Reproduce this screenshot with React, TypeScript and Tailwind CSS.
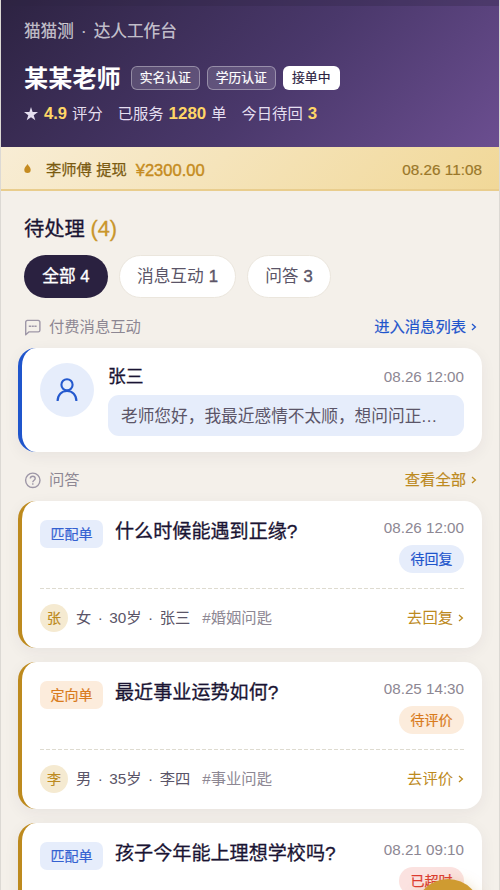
import type { ReactNode } from 'react';
import clsx from 'clsx';

type Order = {
  kind: string;
  title: string;
  time: string;
  status: string;
  user?: { avatar: string; info: string[]; topic: string; action: string };
};

const orders: Order[] = [
  {
    kind: '匹配单',
    title: '什么时候能遇到正缘?',
    time: '08.26 12:00',
    status: '待回复',
    user: { avatar: '张', info: ['女', '30岁', '张三'], topic: '#婚姻问匙', action: '去回复' },
  },
  {
    kind: '定向单',
    title: '最近事业运势如何?',
    time: '08.25 14:30',
    status: '待评价',
    user: { avatar: '李', info: ['男', '35岁', '李四'], topic: '#事业问匙', action: '去评价' },
  },
  { kind: '匹配单', title: '孩子今年能上理想学校吗?', time: '08.21 09:10', status: '已超时' },
];

const kindColors: Record<string, string> = {
  匹配单: 'bg-[#e6edfb] text-[#3461d1]',
  定向单: 'bg-[#fcecdc] text-[#d97b1c]',
};

const statusColors: Record<string, string> = {
  待回复: 'bg-[#e6edfb] text-[#1f55cc]',
  待评价: 'bg-[#fcecdc] text-[#d97b1c]',
  已超时: 'bg-[#fbe2e0] text-[#dc3b30]',
};

function Chevron() {
  return (
    <svg className="w-[6px] h-[8px] shrink-0" viewBox="0 0 6 8" fill="none" stroke="currentColor" strokeWidth="1.3">
      <path d="M1 1 4.4 4 1 7" />
    </svg>
  );
}

function SectionHead({ icon, label, link, color }: { icon: ReactNode; label: string; link: string; color: string }) {
  return (
    <div className="flex items-center h-6 pl-[23px] pr-[22px]">
      {icon}
      <span className="ml-2 text-[15.3px] text-[#8d8793]">{label}</span>
      <span className={clsx('ml-auto flex items-center gap-[5px] text-[15.3px] [-webkit-text-stroke:0.2px_currentColor]', color)}>
        {link}
        <Chevron />
      </span>
    </div>
  );
}

function OrderCard({ order }: { order: Order }) {
  const { user } = order;
  return (
    <div className="h-[147px] shrink-0 rounded-[18px] border-l-4 border-[#bd8a1e] bg-white pl-[18px] pr-[18px] shadow-[0_4px_16px_rgba(45,35,66,0.06)]">
      <div className="flex h-[87px] items-start">
        <span className={clsx('mt-[19px] flex h-[28px] w-[63px] items-center justify-center rounded-[7px] text-[14px] [-webkit-text-stroke:0.2px_currentColor]', kindColors[order.kind])}>
          {order.kind}
        </span>
        <h3 className="ml-[12px] mt-[17px] text-[19.1px] leading-[28px] text-[#1a1433] [-webkit-text-stroke:0.3px_currentColor]">{order.title}</h3>
        <div className="ml-auto mt-[16px] flex flex-col items-end">
          <span className="text-[15.2px] leading-[22px] text-[#8d8793]">{order.time}</span>
          <span className={clsx('mt-[6px] flex h-[28px] w-[65px] items-center justify-center rounded-full text-[14px] [-webkit-text-stroke:0.2px_currentColor]', statusColors[order.status])}>
            {order.status}
          </span>
        </div>
      </div>
      <div className="h-px bg-[repeating-linear-gradient(90deg,#dedbd0_0_4px,transparent_4px_6px)]" />
      {user && (
        <div className="flex h-[58px] items-center text-[15.3px]">
          <span className="flex size-[28px] items-center justify-center rounded-full bg-[#f5ead1] text-[14px] text-[#bd8a1e] [-webkit-text-stroke:0.2px_currentColor]">{user.avatar}</span>
          <span className="ml-[8px] flex text-[#5b5568]">
            {user.info.map((part, i) => (
              <span key={part} className="flex">
                {i > 0 && <span className="w-[18px] text-center">·</span>}
                {part}
              </span>
            ))}
          </span>
          <span className="ml-[12px] text-[#8d8793]">{user.topic}</span>
          <span className="ml-auto flex items-center gap-[5px] text-[#bd8a1e]">
            {user.action}
            <Chevron />
          </span>
        </div>
      )}
    </div>
  );
}

export default function App() {
  return (
    <div className="relative flex h-[890px] w-[500px] flex-col overflow-hidden border-x border-[#dcd9d4] bg-[#f4f0ea] font-['Liberation_Sans','Noto_Sans_CJK_SC',sans-serif] whitespace-nowrap">
      <header className="h-[147px] shrink-0 bg-[linear-gradient(135deg,#2d2342_0%,#4a386b_55%,#6b4e90_100%)] text-white">
        <div className="h-[6px] bg-[#2d2342]/30" />
        <div className="px-[23px]">
          <p className="mt-[14px] flex text-[16.6px] leading-[24px] text-white/70 [-webkit-text-stroke:0.2px_currentColor]">
            猫猫测<span className="w-[20px] text-center">·</span>达人工作台
          </p>
          <div className="mt-[17px] flex h-[34px] items-center">
            <h1 className="mt-[2px] text-[24.2px] leading-[34px] font-bold">某某老师</h1>
            <div className="ml-[10px] flex gap-[7px] text-[12.8px] [-webkit-text-stroke:0.2px_currentColor]">
              <span className="flex h-[24px] w-[69px] items-center justify-center rounded-[6px] border border-white/35 bg-white/15">实名认证</span>
              <span className="flex h-[24px] w-[69px] items-center justify-center rounded-[6px] border border-white/35 bg-white/15">学历认证</span>
              <span className="flex h-[24px] w-[57px] items-center justify-center rounded-[6px] bg-white text-[#2d2342]">接单中</span>
            </div>
          </div>
          <div className="mt-[7px] flex items-center text-[15.3px] leading-[24px] text-[#e5dff0]">
            <svg className="mr-[6px] size-[14px]" viewBox="0 0 13 13" fill="currentColor">
              <path d="M6.5 0 8 4.7H13L9 7.6 10.5 12.4 6.5 9.5 2.5 12.4 4 7.6 0 4.7H5Z" />
            </svg>
            <b className="mr-[5px] text-[16.6px] text-[#ffd666]">4.9</b>评分
            <span className="ml-[15px]">已服务</span>
            <b className="mx-[5px] text-[16.9px] text-[#ffd666]">1280</b>单
            <span className="ml-[15px]">今日待回</span>
            <b className="ml-[5px] text-[16.9px] text-[#ffd666]">3</b>
          </div>
        </div>
      </header>

      <div className="flex h-[44px] shrink-0 items-center border-b-2 border-[#e9cd8d] bg-[linear-gradient(135deg,#f8edd5,#f1d898)] pt-[4px] pr-[17px] pl-[23px] text-[15.3px]">
        <svg className="mb-[4px] h-[9px] w-[7px]" viewBox="0 0 7 9" fill="#c58b20">
          <path d="M3.5 0C4.2 1.7 6.7 3.4 6.7 5.7A3.2 3.2 0 0 1 .3 5.7C.3 3.4 2.8 1.7 3.5 0Z" />
        </svg>
        <span className="ml-[15px] text-[#7a5a10] [-webkit-text-stroke:0.25px_currentColor]">李师傅 提现</span>
        <span className="ml-[9px] text-[16.5px] text-[#c58b20] [-webkit-text-stroke:0.4px_currentColor]">¥2300.00</span>
        <span className="ml-auto text-[#9a7729] [-webkit-text-stroke:0.2px_currentColor]">08.26 11:08</span>
      </div>

      <h2 className="mt-[23px] ml-[23px] text-[20.3px] leading-[30px] text-[#1a1433] [-webkit-text-stroke:0.3px_currentColor]">
        待处理 <span className="text-[21.8px] text-[#c9962c]">(4)</span>
      </h2>
      <div className="mt-[11px] ml-[23px] flex shrink-0 gap-[11px] text-[16.7px] text-[#5b5568]">
        <span className="flex h-[43px] w-[84px] items-center justify-center rounded-full bg-[#2a2140] text-white [-webkit-text-stroke:0.35px_currentColor]">全部 4</span>
        <span className="flex h-[43px] w-[117px] items-center justify-center rounded-full border border-[#ebe6dd] bg-white">
          消息互动<span className="ml-[5px] [-webkit-text-stroke:0.4px_currentColor]">1</span>
        </span>
        <span className="flex h-[43px] w-[84px] items-center justify-center rounded-full border border-[#ebe6dd] bg-white">
          问答<span className="ml-[5px] [-webkit-text-stroke:0.4px_currentColor]">3</span>
        </span>
      </div>

      <div className="mt-[17px]">
        <SectionHead
          label="付费消息互动"
          link="进入消息列表"
          color="text-[#1f55cc]"
          icon={
            <svg className="size-[17px] text-[#9e97a7]" viewBox="0 0 17 17" fill="none" stroke="currentColor" strokeWidth="1.4" strokeLinejoin="round">
              <path d="M3.4 1.4H14.2A1.7 1.7 0 0 1 15.9 3.1V11.2A1.7 1.7 0 0 1 14.2 12.9H4.8L1.7 15.7V3.1A1.7 1.7 0 0 1 3.4 1.4Z" />
              <path d="M4.8 7.2H12.6" strokeWidth="1.5" strokeDasharray="2.2 .6" />
            </svg>
          }
        />
      </div>
      <div className="mx-[17px] mt-[9px] flex h-[104px] shrink-0 rounded-[18px] border-l-4 border-[#1f55cc] bg-white pt-[15px] pr-[18px] pl-[18px] shadow-[0_4px_16px_rgba(45,35,66,0.06)]">
        <span className="flex size-[54px] shrink-0 items-center justify-center rounded-full bg-[#e6edfb]">
          <svg className="size-[26px]" viewBox="0 0 26 26" fill="none" stroke="#2459ce" strokeWidth="2.1">
            <circle cx="13" cy="7.8" r="5.6" />
            <path d="M3.6 24.1C3.6 18 7.5 14 13 14S22.4 18 22.4 24.1" />
          </svg>
        </span>
        <div className="ml-[14px] min-w-0 flex-1">
          <div className="flex items-center justify-between">
            <span className="pt-px text-[17.8px] leading-[26px] text-[#1a1433] [-webkit-text-stroke:0.3px_currentColor]">张三</span>
            <span className="pt-px text-[15.2px] text-[#8d8793]">08.26 12:00</span>
          </div>
          <p className="mt-[5px] h-[41px] rounded-[11px] bg-[#e6edfb] px-[13px] pt-px text-[16.7px] leading-[41px] text-[#5b5568]">
            老师您好，我最近感情不太顺，想问问正<span className="tracking-[0.7px]">...</span>
          </p>
        </div>
      </div>

      <div className="mt-[16px]">
        <SectionHead
          label="问答"
          link="查看全部"
          color="text-[#bd8a1e]"
          icon={
            <svg className="size-[17px] text-[#9e97a7]" viewBox="0 0 17 17" fill="none" stroke="currentColor" strokeWidth="1.4">
              <circle cx="8.8" cy="8.3" r="7.2" />
              <path d="M6.3 6.6C6.3 5.2 7.4 4.3 8.8 4.3S11.2 5.2 11.2 6.5C11.2 8.2 8.8 8.2 8.8 10.2M8.8 11.2V12.7" />
            </svg>
          }
        />
      </div>
      <div className="mx-[17px] mt-[9px] flex flex-col gap-[14px]">
        {orders.map((order) => (
          <OrderCard key={order.title} order={order} />
        ))}
      </div>

      <button className="absolute top-[879px] left-[414px] size-[66px] rounded-full bg-[#cf9b31] shadow-[0_4px_16px_rgba(190,138,30,0.35)]" aria-label="新建" />
    </div>
  );
}
